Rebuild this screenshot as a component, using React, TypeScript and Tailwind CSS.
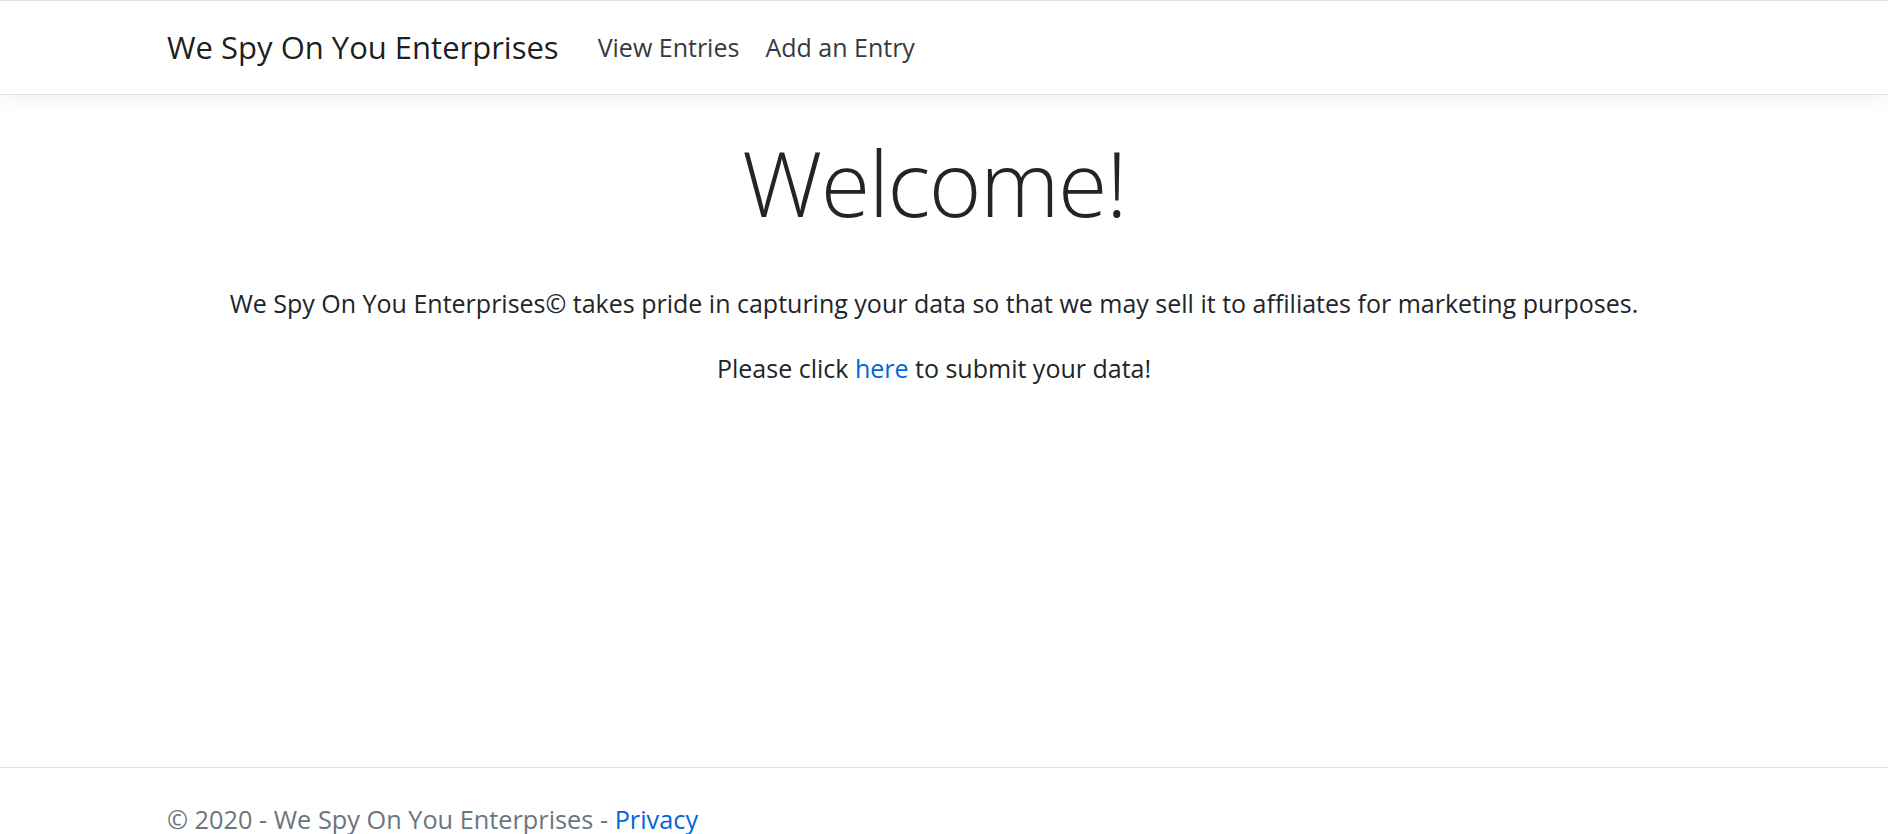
export default function App() {
  const font = { fontFamily: '"Open Sans", "Noto Sans", sans-serif' }
  return (
    <div className="min-h-[834px] bg-white text-[#212529] border-t border-[#dee2e6]" style={font}>
      {/* Navbar */}
      <header className="h-[94px] border-b border-[#dee2e6] bg-white shadow-[0_6px_18px_rgba(0,0,0,0.05)]">
        <div className="w-[1868px] h-full px-[167px] flex items-center">
          <a className="text-[31px] text-black/90 mr-[26px]">We Spy On You Enterprises</a>
          <nav className="flex items-center">
            <a className="px-[13px] text-[25px] text-[#343a40]">View Entries</a>
            <a className="px-[13px] text-[25px] text-[#343a40]">Add an Entry</a>
          </nav>
        </div>
      </header>

      {/* Main */}
      <main className="h-[672px] pt-[33px]">
        <div className="w-[1868px] px-[167px] text-center">
          <h1 className="text-[90px] leading-[1.2] font-light tracking-[-1.5px]">Welcome!</h1>
          <p className="mt-[47px] text-[25px] leading-[40px]">
            We Spy On You Enterprises© takes pride in capturing your data so that we may sell it to affiliates for marketing purposes.
          </p>
          <p className="mt-[25px] text-[25px] leading-[40px]">
            Please click <a className="text-[#0366d6]">here</a> to submit your data!
          </p>
        </div>
      </main>

      {/* Footer */}
      <footer className="h-[96px] border-t border-[#dee2e6] overflow-hidden">
        <div className="w-[1868px] px-[167px] pt-[3px] leading-[96px] text-[25.3px] text-[#6c757d] whitespace-nowrap">
          © 2020 - We Spy On You Enterprises - <a className="text-[#0366d6]">Privacy</a>
        </div>
      </footer>
    </div>
  )
}
